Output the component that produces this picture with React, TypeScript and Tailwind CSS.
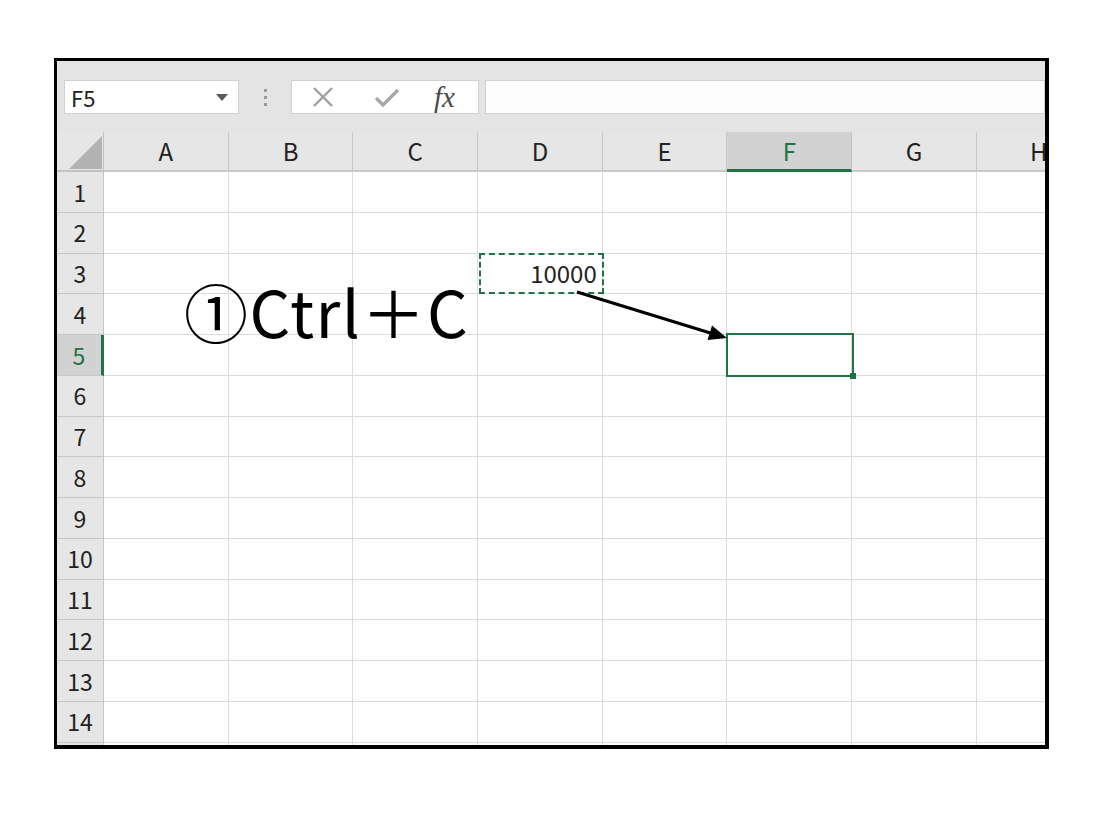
import React from "react"

const cols = ["A", "B", "C", "D", "E", "F", "G", "H"]
const rows = Array.from({ length: 14 }, (_, i) => i + 1)

const font = { fontFamily: '"Noto Sans CJK JP", "Noto Sans", sans-serif' }

function Toolbar() {
  return (
    <div className="flex h-[71px] shrink-0 items-start bg-[#e4e4e4] pt-[19px] pl-[7px]">
      {/* name box */}
      <div className="flex h-[34px] w-[175px] items-center justify-between border border-[#d0d0d0] bg-white pl-[6px] pr-[10px]">
        <span className="text-[22px] leading-none text-[#222]">F5</span>
        <svg width="12" height="7" viewBox="0 0 12 7">
          <path d="M0 0 L12 0 L6 7 Z" fill="#5a5a5a" />
        </svg>
      </div>
      {/* grip dots */}
      <div className="flex h-[34px] w-[52px] flex-col items-center justify-center gap-[4px]">
        <span className="h-[3px] w-[3px] bg-[#9a9a9a]" />
        <span className="h-[3px] w-[3px] bg-[#9a9a9a]" />
        <span className="h-[3px] w-[3px] bg-[#9a9a9a]" />
      </div>
      {/* formula icons */}
      <div className="flex h-[34px] w-[188px] items-center border border-[#d0d0d0] bg-white pl-[20px]">
        <svg width="22" height="20" viewBox="0 0 22 20" className="mr-[40px]">
          <path d="M2 1 L20 19 M20 1 L2 19" stroke="#a0a0a0" strokeWidth="2.4" />
        </svg>
        <svg width="26" height="20" viewBox="0 0 26 20" className="mr-[34px]">
          <path d="M2 11 L9 18 L24 3" stroke="#a8a8a8" strokeWidth="3.4" fill="none" />
        </svg>
        <span
          className="text-[29px] italic leading-none text-[#4a4a4a]"
          style={{ fontFamily: '"Liberation Serif", serif' }}
        >
          fx
        </span>
      </div>
      {/* formula input */}
      <div className="ml-[6px] h-[34px] flex-1 border border-[#d0d0d0] bg-[#fdfdfd]" />
    </div>
  )
}

function HeaderRow() {
  return (
    <div className="flex h-[40px] shrink-0 bg-[#e6e6e6]">
      <div className="relative h-full w-[47px] shrink-0 border-r border-b-2 border-[#c2c2c2]">
        <svg width="33" height="33" viewBox="0 0 33 33" className="absolute left-[12px] top-[4px]">
          <path d="M33 0 L33 33 L0 33 Z" fill="#b3b3b3" />
        </svg>
      </div>
      {cols.map((c) =>
        c === "F" ? (
          <div
            key={c}
            className="flex h-full w-[124.7px] shrink-0 items-center justify-center border-r border-b-[3px] border-r-[#c2c2c2] border-b-[#217346] bg-[#d2d2d2] text-[24px] text-[#217346]"
          >
            {c}
          </div>
        ) : (
          <div
            key={c}
            className="flex h-full w-[124.7px] shrink-0 items-center justify-center border-r border-b-2 border-[#c8c8c8] text-[24px] text-[#222]"
          >
            {c}
          </div>
        )
      )}
    </div>
  )
}

function GridRow({ n }: { n: number }) {
  const selected = n === 5
  return (
    <div className="flex h-[40.75px] shrink-0">
      <div
        className={
          selected
            ? "flex h-full w-[47px] shrink-0 items-center justify-center border-r-[3px] border-b border-r-[#217346] border-b-[#c6c6c6] bg-[#d2d2d2] text-[23px] text-[#217346]"
            : "flex h-full w-[47px] shrink-0 items-center justify-center border-r border-b border-[#c6c6c6] bg-[#e6e6e6] text-[23px] text-[#222]"
        }
      >
        {n}
      </div>
      {cols.map((c) => (
        <div
          key={c}
          className="flex h-full w-[124.7px] shrink-0 items-center justify-end border-r border-b border-[#dcdcdc] pr-[5px] text-[24px] text-[#222]"
        >
          {n === 3 && c === "D" ? "10000" : ""}
        </div>
      ))}
    </div>
  )
}

export default function App() {
  return (
    <div className="h-[818px] w-[1096px] bg-white pt-[58px] pl-[54px]" style={font}>
      <div className="relative flex h-[691px] w-[995px] flex-col overflow-hidden border-t-[3px] border-l-[3px] border-r-4 border-b-4 border-black bg-white">
        <Toolbar />
        <HeaderRow />
        {rows.map((n) => (
          <GridRow key={n} n={n} />
        ))}
        {/* next row peeking under the frame */}
        <div className="flex h-[10px] shrink-0">
          <div className="w-[47px] shrink-0 border-r border-[#c6c6c6] bg-[#e6e6e6]" />
          {cols.map((c) => (
            <div key={c} className="w-[124.7px] shrink-0 border-r border-[#dcdcdc]" />
          ))}
        </div>

        {/* copy marquee on D3 */}
        <div className="absolute left-[422px] top-[192px] h-[41px] w-[125px] border-2 border-dashed border-[#217346]" />

        {/* active cell F5 */}
        <div className="absolute left-[669px] top-[272px] h-[44px] w-[128px] border-[2.5px] border-[#217346]">
          <div className="absolute -right-[4px] -bottom-[4px] h-[6px] w-[6px] bg-[#217346]" />
        </div>

        {/* annotation */}
        <div className="absolute left-[127px] top-[217px] text-[64px] leading-none tracking-[1.5px] text-black">
          ①Ctrl＋C
        </div>

        <svg className="pointer-events-none absolute inset-0" width="988" height="684">
          <line x1="520" y1="231" x2="655" y2="272.5" stroke="#000" strokeWidth="3.2" />
          <path d="M670 277 L650.5 279 L655 264.5 Z" fill="#000" />
        </svg>
      </div>
    </div>
  )
}
